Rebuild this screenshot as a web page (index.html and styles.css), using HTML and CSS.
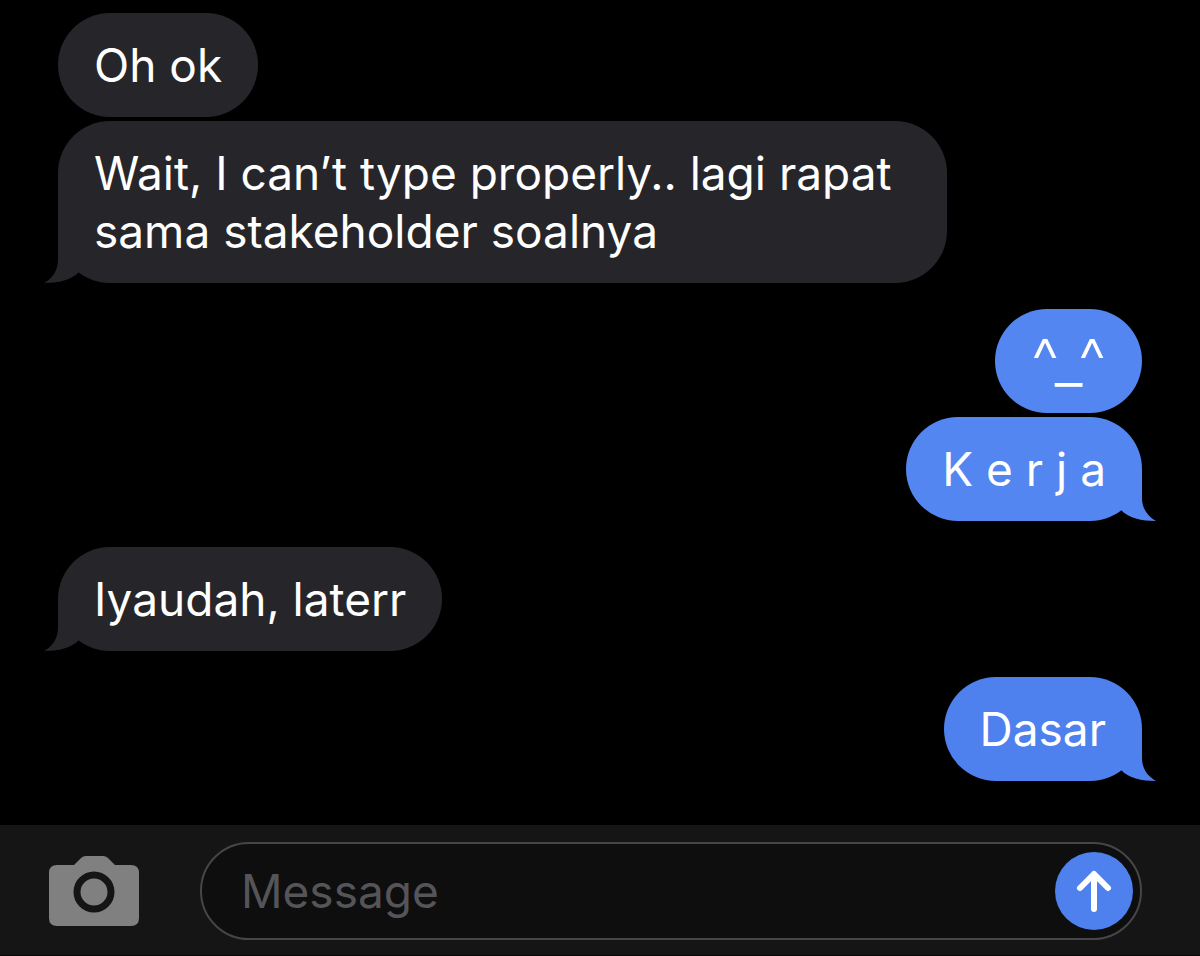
FILE: index.html
```html
<!DOCTYPE html>
<html lang="id">
<head>
<meta charset="utf-8">
<meta name="viewport" content="width=device-width, initial-scale=1">
<title>Messages</title>
<link rel="stylesheet" href="styles.css">
</head>
<body>
<svg class="sprite" aria-hidden="true">
  <symbol id="tail" viewBox="0 0 50 52">
    <path d="M14 0V29C14 39 9 47 0 52C14 52 28 49 35 41L50 14V0Z"/>
  </symbol>
</svg>
<main class="thread">
  <div class="group">
    <p class="bubble">Oh ok</p>
    <p class="bubble">Wait, I can’t type properly.. lagi rapat sama stakeholder soalnya<svg class="tail" aria-hidden="true"><use href="#tail"/></svg></p>
  </div>
  <div class="group sent">
    <p class="bubble emoticon">^_^</p>
    <p class="bubble">K e r j a<svg class="tail" aria-hidden="true"><use href="#tail"/></svg></p>
  </div>
  <div class="group">
    <p class="bubble">Iyaudah, laterr<svg class="tail" aria-hidden="true"><use href="#tail"/></svg></p>
  </div>
  <div class="group sent latest">
    <p class="bubble">Dasar<svg class="tail" aria-hidden="true"><use href="#tail"/></svg></p>
  </div>
</main>
<form class="composer">
  <button class="camera" type="button" aria-label="Camera">
    <svg viewBox="0 0 90 70" aria-hidden="true">
      <path class="camera-body" d="M8 9H25L32 2Q34 0 37 0H54Q57 0 59 2L66 9H82Q90 9 90 17V62Q90 70 82 70H8Q0 70 0 62V17Q0 9 8 9Z"/>
      <circle class="camera-ring" cx="45" cy="36" r="17"/>
    </svg>
  </button>
  <div class="field">
    <input class="input" type="text" placeholder="Message" aria-label="Message">
    <button class="send" type="submit" aria-label="Send">
      <svg viewBox="0 0 78 78" aria-hidden="true">
        <path d="M39 57V22M25 36L39 22L53 36"/>
      </svg>
    </button>
  </div>
</form>
</body>
</html>
```
FILE: styles.css
```css
* {
  box-sizing: border-box;
}

body {
  margin: 0;
  min-height: 100vh;
  display: flex;
  flex-direction: column;
  background: #000;
  color: #fff;
  font-family: Inter, "Liberation Sans", sans-serif;
  font-size: 46px;
  line-height: 58px;
}

button {
  padding: 0;
  border: 0;
  background: none;
  cursor: pointer;
}

.sprite {
  position: absolute;
  width: 0;
  height: 0;
}

.thread {
  flex: 1;
  display: flex;
  flex-direction: column;
  gap: 26px;
  padding: 13px 58px 43px;
}

.group {
  --fill: #26262a;
  display: flex;
  flex-direction: column;
  align-items: flex-start;
  gap: 4px;
}

.sent {
  --fill: #5386f0;
  align-items: flex-end;
}

.latest {
  --fill: #4f81ee;
}

.bubble {
  position: relative;
  max-width: 82%;
  margin: 0;
  padding: 23px 36px;
  border-radius: 52px;
  background: var(--fill);
}

.emoticon {
  font-size: 62px;
  font-weight: 300;
}

.tail {
  position: absolute;
  bottom: 0;
  left: -14px;
  width: 50px;
  height: 52px;
  fill: var(--fill);
}

.sent .tail {
  left: auto;
  right: -14px;
  transform: scaleX(-1);
}

.composer {
  display: flex;
  align-items: center;
  gap: 61px;
  padding: 17px 58px 15px 49px;
  border-bottom: 1px solid #080508;
  background: #151515;
}

.camera {
  width: 90px;
  height: 70px;
}

.camera svg,
.send svg {
  display: block;
  width: 100%;
  height: 100%;
}

.camera-body {
  fill: #808080;
}

.camera-ring {
  fill: none;
  stroke: #151515;
  stroke-width: 7;
}

.field {
  flex: 1;
  display: flex;
  align-items: center;
  padding: 8px 7px 8px 39px;
  border: 2px solid #464648;
  border-radius: 49px;
  background: #0e0e0e;
}

.input {
  flex: 1;
  min-width: 0;
  height: 58px;
  padding: 0;
  border: 0;
  outline: 0;
  background: none;
  color: #fff;
  font: inherit;
}

.input::placeholder {
  color: #555459;
  opacity: 1;
}

.send {
  width: 78px;
  height: 78px;
  border-radius: 50%;
  background: #4f81ee;
}

.send path {
  fill: none;
  stroke: #fff;
  stroke-width: 6;
  stroke-linecap: round;
  stroke-linejoin: round;
}
```
